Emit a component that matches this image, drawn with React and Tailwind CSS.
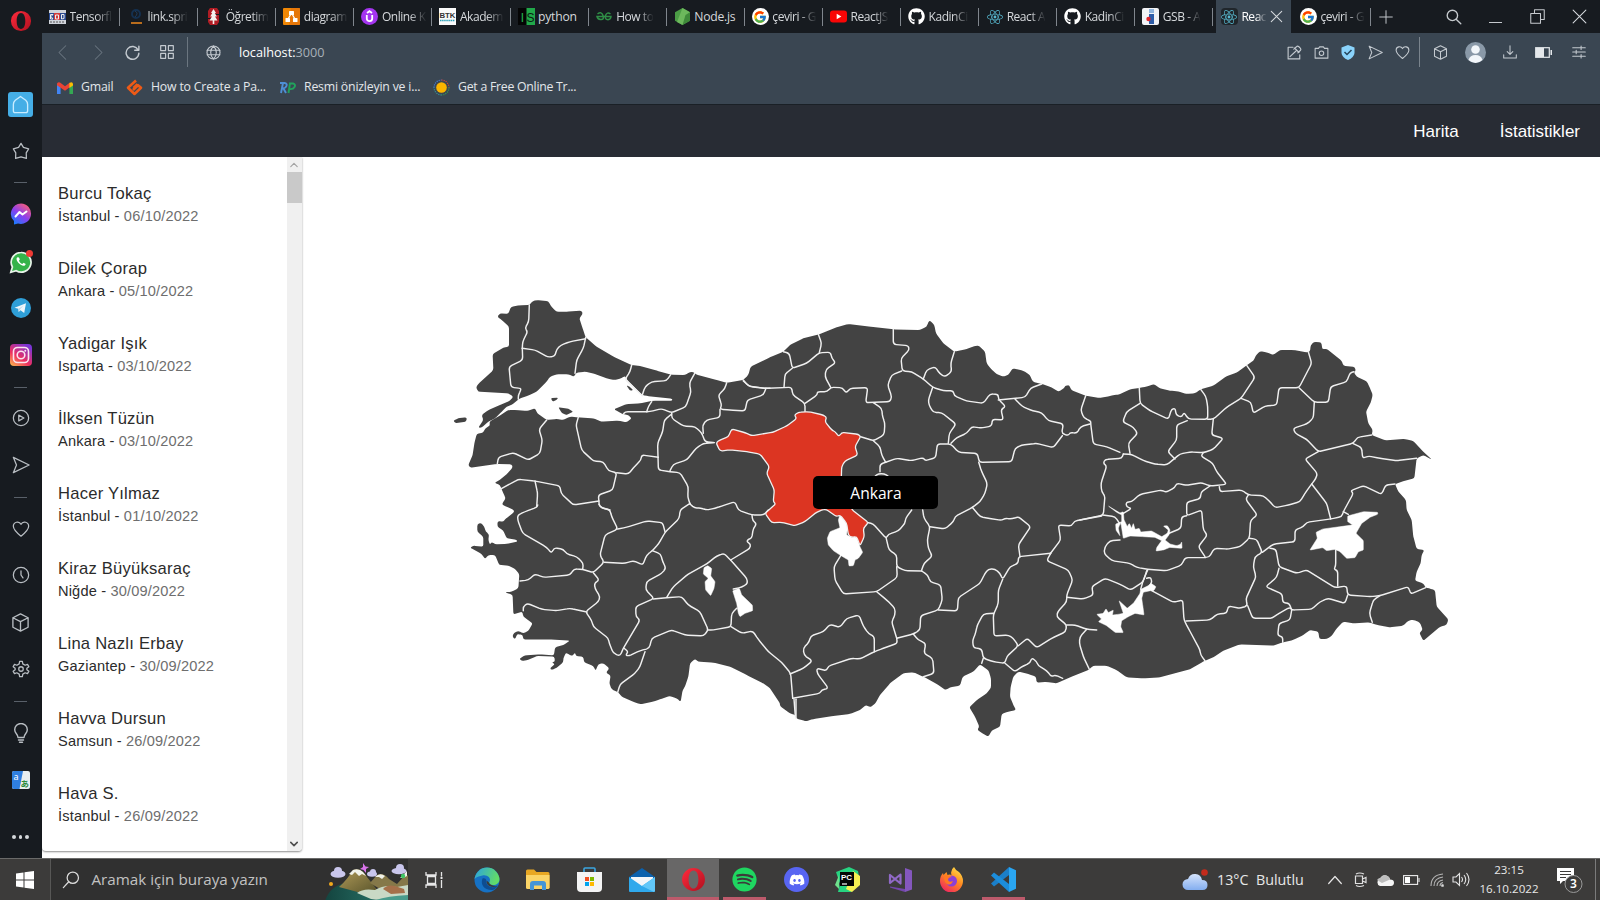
import React from "react";
import { FaReact, FaGithub, FaDiscord, FaSpotify } from "react-icons/fa";
import { FcGoogle } from "react-icons/fc";

/* ---------- Map data: sheets with an origin, points in thirds of a unit ---------- */

const COAST = [
  [440, 280, "172,110 180,100 205,102 213,80 240,76 270,75 275,65 290,60 325,64 335,82 350,95 380,95 425,92 428,102 418,115 428,145 437,172 470,200 520,230 575,255 600,258 650,272 692,284 735,285 750,276 760,276 768,283 830,300 860,308 910,300 925,285 932,260 990,232"],
  [740, 300, "90,172 130,155 150,135 190,115 238,103 290,82 325,72 380,79 460,88 540,90 560,80 565,66 570,62 583,75 588,100 610,130 643,155 680,147 708,137 718,138 735,155 740,190 752,206 770,222 790,230 805,225 818,205 850,212 870,225 878,245 905,252 935,262 955,275 972,265 975,258 988,255 993,270 1037,287"],
  [1080, 320, "17,227 60,234 90,228 105,224 115,225 150,208 178,204 200,200 222,192 240,205 270,212 295,214 320,222 345,220 362,208 400,197 440,168 470,158 500,136 520,122 530,103 540,94 560,97 580,105 600,90 640,90 680,97 690,95 692,75 702,66 724,67 727,88 740,86 785,122 790,137 825,141 827,153 822,158 830,170 860,184 870,204 878,225 872,248 858,275 865,310 878,330 875,345 915,361 975,357 1000,363 1025,390 1053,417 1054,418 1030,405 1010,415 1003,475 975,482 945,492 955,515 978,540 980,570 995,600 1000,650 1010,687 1033,690 1025,705 1022,730 1010,755 1005,782 1030,790 1037,803 1047,805 1065,810 1070,860 1105,898 1100,915 1080,920 1030,962 1018,938 1028,930 1020,908 1000,899 985,902 970,917 930,922 890,915 868,907 820,910 790,905 770,925 755,948 740,957 718,957 715,935 690,930 670,945 640,960 608,967 580,977 480,973 430,992 400,1012 375,1022 360,1030 330,1048"],
  [780, 500, "1140,532 1090,535 1040,532 1010,510 980,497 940,497 925,510 880,528 840,545 830,550 800,546 770,548 768,530 745,522 715,515 700,530 692,560 690,590 700,615 708,630 685,635 665,642 660,680 635,692 625,710 612,703 592,690 598,680 585,650 568,622 590,600 620,580 633,563 633,535 626,512 600,493 580,515 548,530 540,557 510,562 497,570 470,552 430,530 400,517 370,520 330,550 300,585 285,612 270,622 258,615 240,630 210,642 160,648 100,657 78,664 65,660 48,655 47,645 30,640 0,618"],
  [440, 500, "1020,610 990,565 970,550 920,525 870,500 820,488 775,485 765,477 750,490 745,530 735,560 728,570 722,605 710,595 690,588 660,598 640,605 600,613 580,605 545,590 535,577 515,568 508,550 512,527 498,518 508,505 490,490 475,492 467,512 460,498 432,487 430,470 408,468 405,457 398,468 390,465 378,458 370,475 370,487 350,503 335,510 330,505 345,492 335,487 345,485 343,470 290,468 265,480 245,483 238,476 255,466 300,463 342,466 345,442 370,435 390,422 340,419 250,418 248,405 232,402 225,418 217,410 222,398 235,393 250,400 265,393 278,370 250,350 247,335 220,343 218,285 195,277 215,275 235,265 238,222 225,207 205,197 178,195 165,165 145,165 135,177 125,162 90,143 100,137 130,140 130,110 112,95 112,73 122,68 133,80 137,95 147,102 145,120 150,135 155,125 165,133 200,132 232,125 230,119 200,115 190,92 172,80 173,63 190,65 195,58 205,50 222,37 222,30 200,20 188,15"],
  [440, 280, "187,670 197,655 190,640 180,615 163,608 175,603 200,583 218,562 215,553 170,552 90,563 85,555 98,525 103,490 110,462 130,458 135,445 150,437 148,425 175,410 205,390 230,390 260,393 285,385 292,400 320,420 350,417 370,420 390,410 415,412 460,415 485,425 535,422 560,427 575,415 565,405 550,403 522,388 560,372 600,370 640,362 697,362 697,356 620,348 607,345 560,298 555,287 545,295 525,300 505,297 465,282 435,275 408,278 403,290 385,283 350,283 330,290 320,305 290,335 265,347 240,355 215,375 200,380 185,395 165,415 145,425 125,443 115,443 130,420 125,405 145,390 180,375 210,362 220,350 205,340 115,335 108,322 115,312 160,270 158,222 190,203 207,200 207,140 185,120"],
];

const ISLANDS = [
  [440, 280, "40,422 55,415 78,412 81,418 76,426 45,429"],
  [440, 280, "332,354 355,353 350,360 338,365"],
  [440, 280, "355,382 385,386 400,395 378,405 365,398"],
  [440, 280, "559,316 568,319 580,331 570,332"],
];

const LAKES = [
  [440, 500, "792,203 803,197 815,205 812,228 825,245 822,265 812,287 797,270 795,245 805,235 790,222"],
  [440, 500, "878,272 898,265 905,285 937,315 938,332 915,340 900,350 895,340 890,310"],
  [740, 300, "300,645 315,655 322,680 320,705 335,712 350,710 360,740 368,757 355,775 345,780 340,797 327,798 325,780 300,765 280,752 265,735 262,715 270,695 300,683 295,660"],
  [1080, 320, "690,690 712,655 708,637 728,627 780,620 818,615 803,605 803,588 850,575 893,577 893,583 870,592 845,610 828,640 850,662 850,690 835,695 825,713 800,715 780,695 765,688 740,692 728,683"],
  [1080, 320, "85,558 120,579 130,575 132,600 142,620 148,610 155,625 160,610 165,628 178,625 182,636 215,633 245,650 262,640 265,630 250,618 262,617 270,630 267,645 255,660 270,672 290,677 302,673 305,665 306,685 270,682 250,690 228,693 230,683 245,662 225,652 190,650 150,648 130,655 122,605 115,625 120,648 108,630 107,612 125,605 125,585 110,577"],
  [1080, 320, "50,883 70,880 78,866 85,878 100,870 97,885 115,883 130,880 117,842 142,865 160,850 180,820 182,808 205,797 213,790 228,800 221,812 210,812 190,817 185,835 188,855 192,885 178,882 165,880 145,890 125,902 122,920 130,938 105,937 80,917 55,905 65,897"],
];

const ANKARA = [740, 300, "-72,428 -60,420 -35,410 -25,387 15,398 35,407 98,397 140,378 170,355 163,345 175,337 205,335 250,345 260,352 255,365 275,390 285,395 297,410 305,397 355,403 362,410 345,440 353,465 315,483 305,500 303,560 335,628 385,668 370,685 373,710 360,737 350,710 335,712 325,705 320,670 300,645 290,650 258,628 245,630 225,640 195,665 165,677 125,667 95,668 75,640 107,612 100,605 103,570 80,520 88,500 60,462 20,455 -30,450 -60,453"];

const BORDERS = [
  [440, 280, [
    "268,75 266,125 255,145 263,155 248,185 247,205",
    "247,205 285,210 325,232 345,228 350,208 362,196 390,185 437,176",
    "247,205 248,240 207,260 213,322 245,325 235,345 235,358",
    "437,172 430,205 410,240 405,280",
    "575,255 570,275 555,298 607,347",
    "692,284 680,302 635,305 615,320 607,345",
    "764,280 748,310 753,335 738,380 695,398 665,386 630,395 555,395 550,403",
    "635,365 625,380 620,395",
    "860,308 855,325 835,345 845,375 840,388 870,390 915,393 922,360 970,345 978,325",
    "910,300 925,318 975,325 990,325",
    "840,388 840,412 800,420 788,435 790,460",
    "695,398 695,415 730,438 765,440 785,458 795,485 828,488 790,490 768,505 740,540 700,553 690,572",
    "695,402 673,420 668,455 653,490 655,570 690,575 720,578 745,620 743,650 750,672",
    "655,532 605,525 603,540 585,558 565,582 530,578",
    "415,412 408,435 425,510 460,543 490,545 505,572 530,578 518,630 475,645 478,680 510,690",
    "320,420 297,448 307,480 300,520 265,540 220,518 175,532 172,552",
    "180,628 235,598 285,603 360,618 363,640 400,675 477,663",
    "285,603 293,640 290,680",
    "750,672 765,685 780,683 800,690 825,685 845,678 885,665 895,690 935,705 970,705 985,690",
  ]],
  [740, 300, [
    "130,155 148,160 157,205 200,190 238,158 272,157 275,175 287,188 258,208 255,230 272,262",
    "235,103 245,130 238,158",
    "157,205 135,222 132,262",
    "10,243 30,260 75,265 155,262 158,285 195,310 195,335",
    "195,310 232,285 232,275 262,275 272,262 308,263 318,280 330,265 383,263 377,308 450,305 455,290 443,255 455,225 485,213",
    "460,88 460,133 505,137 508,150 483,175 487,213 515,215 550,237 578,262 610,272 640,272 642,287 680,303 730,310 750,282 775,283 775,297 797,320 783,328 790,360 757,358 755,378 725,384 695,380 680,400 650,413 633,430",
    "643,155 632,190 635,215 615,230 600,222 585,200 560,210 550,237",
    "578,262 565,300 567,315 580,337 605,338 648,372 628,400 625,430",
    "400,308 425,325 428,352 435,370 432,405 400,422 362,410",
    "400,422 420,440 425,465 437,487",
    "437,487 470,475 515,482 550,473 555,482 587,473 592,432 633,432 655,457 712,460 718,487 815,485 825,445 845,435 890,430 940,443 967,407",
    "437,487 420,493 420,515",
    "406,528 415,521 433,521 444,528",
    "775,300 855,292 872,264 905,252",
    "825,297 845,318 870,330 905,338 925,362 970,372 965,400 985,407 990,397 1010,400 1022,380 1050,372",
    "1037,287 1022,330 1032,355 1052,362 1052,372 1060,432 1100,440 1140,457",
    "716,487 725,515 742,550 735,580 720,605 697,622 645,650 640,665 615,687 570,680",
    "697,622 720,650 745,655 785,661 795,655 815,657 835,650 872,680 835,735 840,770",
    "930,762 962,720 955,675 995,678 1003,663 1085,648",
    "515,630 497,655 495,670 475,693 445,703 438,715 400,672 385,668",
    "548,630 552,655 570,680 562,720 565,745 577,768 552,790 545,810",
  ]],
  [440, 500, [
    "293,15 290,22 255,35 233,45 233,60 248,100 300,130 320,142 335,160 342,143 370,148 380,162 410,170 430,190 428,208",
    "477,13 485,24 510,30 515,50 533,87 495,105 480,165 492,187 460,218 428,208 402,207 390,225 310,232 285,222 265,240 240,243",
    "533,87 560,82 620,63 668,68 675,95",
    "750,10 720,30 718,55 675,97 657,130 637,152 620,165 608,195 580,182 555,190 492,187",
    "637,152 662,162 668,185 678,205 665,220 620,245 617,270 642,295 587,320 588,350 600,360 550,445 540,468 520,460 508,430 505,415 460,380 455,362 437,335 475,305 480,290 465,265 463,250 478,240 460,218",
    "437,335 390,325 350,332 305,328 262,310 250,320 250,332",
    "640,297 680,293 725,290 745,315 780,335 805,390 790,408 735,405 695,390 635,415 628,445 600,452 565,468 557,465 565,455 552,445",
    "615,455 600,500 585,520 540,553 533,577",
    "680,292 700,260 745,222 800,192 830,168 852,160 872,180 920,235 923,250 905,262 880,267",
    "872,180 930,145 932,132 920,125 925,118 935,115 940,85 950,72 938,62 936,45",
    "890,325 875,340 873,380 820,390 805,390",
    "873,380 905,400 938,393 955,418 985,455 1025,487 1052,520 1058,595",
    "1068,598 1068,655",
    "1062,597 1066,648",
  ]],
  [780, 500, [
    "183,165 162,200 165,240 190,282 290,275 352,232 350,200",
    "318,112 327,150 350,165 350,200 375,212 425,213",
    "290,275 320,300 345,325 345,345 335,365 350,415",
    "425,213 443,225 450,245 482,255 487,300 475,330 422,347 420,390 400,402 350,415",
    "350,415 352,430 310,445 283,455 240,477 215,475 145,498 140,512 110,505 112,520 145,565 125,570 120,580 38,595",
    "283,455 283,410 265,400 250,378 237,345 200,355 180,382 150,373 130,395 92,408 88,425 70,445 72,465 97,483 70,505 30,522",
    "400,402 415,420 437,430 432,460 458,475 462,520 430,530",
    "475,330 532,333 535,293 600,250 615,220 625,207 645,207 660,220 668,238 690,200 715,190 715,170 812,160",
    "668,238 655,270 655,310 640,345 642,408 685,405 700,415 715,437 680,470 675,490 640,485 610,475 605,447 580,443 578,420 585,405 592,375 610,342 640,340",
    "605,490 610,475",
    "715,437 742,415 770,443 815,415 857,395 860,375 830,350 833,335 860,305 860,285 878,240 865,210 800,182 812,160",
    "860,375 885,375 920,388 950,390",
    "920,388 900,410 898,430 910,470 928,508",
    "675,490 705,515 730,497 750,490 755,473 770,485 775,497 800,512 815,530 825,525 848,535",
    "860,292 910,297 940,285 935,260 975,235 1020,253 1052,270 1090,245 1100,212",
  ]],
  [1080, 320, [
    "178,204 180,250 210,272 265,297 275,267 286,265 288,285 305,292 312,277 325,297 383,298 383,260 378,230 362,208",
    "180,250 140,275 128,305 160,322 173,340 145,370 150,400",
    "130,402 155,403 190,422 225,432 260,435 300,402 330,396 370,398 400,388 430,355 395,345 400,298",
    "383,298 400,298 440,262 483,235 525,172 500,136",
    "322,302 290,315 290,360 263,395 285,417",
    "483,235 513,247 520,280 555,258 590,255 597,203 657,203 695,130 685,95",
    "657,203 703,247 745,247 752,200 800,185 810,158 822,155",
    "703,247 700,295 680,312 640,325 645,340 680,358 715,395 820,370 832,352 875,345",
    "818,370 845,383 848,415 865,408 900,415 950,422 1010,415",
    "715,395 675,417 712,460 708,475 695,492 675,520 660,545 625,555 585,563 570,545 550,527 505,525 485,510 420,515 418,500",
    "370,398 363,408 398,430 410,455 440,493 390,498 365,488 320,496 290,490 285,502 258,517 245,510 180,523 155,545 138,547 140,562 155,565 130,580",
    "390,498 362,517 362,535 320,547 320,587 365,570 370,630 382,645 355,680 375,710",
    "320,587 305,590 303,625 262,642",
    "130,402 125,415 75,418 70,430 80,438 63,490 65,515 75,527 70,585 0,600",
    "68,585 105,590 120,612",
    "505,525 497,538 532,585 512,600 508,655 480,680 445,687 403,685 387,712 315,713 305,735 260,752 203,748 170,742 150,730 95,722 72,700 75,680 90,662 120,660",
    "508,655 530,658 547,697 525,710 520,740 528,770 497,838 503,857 480,865 445,858 440,880 412,882 390,900 318,903",
    "547,697 580,672 645,665 645,630 670,620 680,607 752,597 785,590 790,575 820,520 812,512 850,497 905,523 917,495 945,492",
    "695,492 740,550 752,597",
    "570,685 588,688 597,740 650,760 680,750 765,803 800,798 803,825 870,830 900,827 985,800 992,822 1037,803",
    "790,575 805,583",
    "597,745 590,772 557,800 607,822 608,848 628,850 635,870",
    "503,857 518,895 575,895 600,878 630,862 635,870 695,868 720,845 745,835 795,850 803,825",
    "635,870 630,900 597,910 593,947 608,950 608,967",
    "767,690 767,738 762,748 773,752 773,798",
    "900,827 880,840 868,880 877,907",
    "203,750 190,780 182,808",
    "200,775 212,772 216,785 210,795",
    "215,812 280,847 308,840 312,900 325,925 360,990 362,1005 375,1022",
  ]],
];

const project = ([ox, oy, text]) =>
  text.split(" ").map((pair) => {
    const [x, y] = pair.split(",").map(Number);
    return [ox + x / 3, oy + y / 3];
  });

/* Point on the way from a to b, at most `max` away from a and never past the middle. */
const towards = (a, b, max) => {
  const d = Math.hypot(b[0] - a[0], b[1] - a[1]) || 1;
  const t = Math.min(max / d, 0.5);
  return [a[0] + (b[0] - a[0]) * t, a[1] + (b[1] - a[1]) * t];
};

const fmt = ([x, y]) => `${x.toFixed(1)} ${y.toFixed(1)}`;

/* Path through the points with softly rounded corners. */
function rounded(points, closed, radius = 4) {
  const n = points.length;
  if (closed) {
    const parts = points.map((p, i) => {
      const before = towards(p, points[(i + n - 1) % n], radius);
      const after = towards(p, points[(i + 1) % n], radius);
      return `${i ? "L" : "M"}${fmt(before)}Q${fmt(p)} ${fmt(after)}`;
    });
    return `${parts.join("")}Z`;
  }
  let d = `M${fmt(points[0])}`;
  for (let i = 1; i < n - 1; i++) {
    d += `L${fmt(towards(points[i], points[i - 1], radius))}Q${fmt(points[i])} ${fmt(towards(points[i], points[i + 1], radius))}`;
  }
  return `${d}L${fmt(points[n - 1])}`;
}

const coastPath = rounded(COAST.flatMap(project), true, 2);

function TurkeyMap() {
  return (
    <svg viewBox="303 157 1297 701" className="block h-full w-full">
      <path d={coastPath} fill="#434343" />
      {ISLANDS.map((s, i) => <path key={i} d={rounded(project(s), true, 1.5)} fill="#434343" />)}
      <g fill="none" stroke="#f0f0f0" strokeWidth="1.45" strokeLinejoin="round" strokeLinecap="round">
        {BORDERS.flatMap(([x, y, lines], i) =>
          lines.map((line, j) => <path key={`${i}-${j}`} d={rounded(project([x, y, line]), false, 3)} />)
        )}
      </g>
      {LAKES.map((s, i) => <path key={i} d={rounded(project(s), true, 0.8)} fill="#fff" stroke="#fff" strokeWidth="0.5" />)}
      <path d={rounded(project(ANKARA), true, 2.5)} fill="#dc3522" stroke="#f0f0f0" strokeWidth="1.3" strokeLinejoin="round" />
    </svg>
  );
}

/* ---------- Icons ---------- */

function Line({ size = 18, children, className = "", w = 1.4 }) {
  return (
    <svg width={size} height={size} viewBox="0 0 20 20" fill="none" stroke="currentColor" strokeWidth={w}
      strokeLinecap="round" strokeLinejoin="round" className={`shrink-0 ${className}`}>
      {children}
    </svg>
  );
}

const Cube = (p) => <Line {...p}><path d="M10 1 18 5v10l-8 4-8-4V5zM2 5l8 4 8-4M10 9v10" /></Line>;
const Heart = (p) => <Line {...p}><path d="M10 18C5 14 1.5 11 1.5 7A4.5 4.5 0 0 1 10 4.8 4.5 4.5 0 0 1 18.500 7C18.500 11 15 14 10 18z" /></Line>;
const Send = (p) => <Line {...p}><path d="M1.500 1.500 19 10 1.500 18.500 5 10z" /></Line>;

function Opera({ size, id }) {
  return (
    <svg width={size} height={size} viewBox="0 0 24 24">
      <defs>
        <linearGradient id={id} x1="0" y1="0" x2="1" y2="1">
          <stop offset="0" stopColor="#ff2b3d" /><stop offset="1" stopColor="#b0101f" />
        </linearGradient>
      </defs>
      <path fillRule="evenodd" fill={`url(#${id})`} d="M12 1a11 11 0 1 0 0 22 11 11 0 0 0 0-22zm0 2.300c3 0 4.700 3.800 4.700 8.700s-1.700 8.700-4.700 8.700S7.300 16.900 7.300 12 9 3.300 12 3.300z" />
    </svg>
  );
}

function Messenger() {
  return (
    <svg width="22" height="22" viewBox="0 0 22 22">
      <defs>
        <linearGradient id="msg" x1="0.100" y1="1" x2="0.800" y2="0">
          <stop offset="0" stopColor="#0a84ff" /><stop offset="0.500" stopColor="#8a3ff0" /><stop offset="1" stopColor="#ff5f72" />
        </linearGradient>
      </defs>
      <path d="M11 .5a10.200 10.200 0 1 1-3 20L4 21.500V18A10.200 10.200 0 0 1 11 .5z" fill="url(#msg)" />
      <path d="M5.500 13.500 9.500 9l3 2.500 4-3" fill="none" stroke="#fff" strokeWidth="2" strokeLinejoin="round" strokeLinecap="round" />
    </svg>
  );
}

function Whatsapp() {
  return (
    <svg width="24" height="24" viewBox="0 0 24 24">
      <path d="M12 2.500A9.800 9.800 0 1 1 7.200 20.700L1.800 22.300 3.400 17A9.800 9.800 0 0 1 12 2.500z" fill="#35b34a" stroke="#e7f3e8" strokeWidth="1.700" />
      <path d="M8.500 7.200c-1.500.8-1.300 3 .6 5.200 2 2.300 5 4.200 6.700 3 1.300-1 .9-1.600.1-2l-1.400-.7-1.200 1.200c-1.500-.6-2.700-1.800-3.400-3.200l.9-1.200-.8-2.100z" fill="#fff" />
      <circle cx="20.500" cy="3.500" r="3.500" fill="#ef3b35" />
    </svg>
  );
}

function Telegram() {
  return (
    <svg width="20" height="20" viewBox="0 0 20 20">
      <circle cx="10" cy="10" r="10" fill="#2f9fd8" />
      <path d="M3.500 9.800 15 5.300 13.200 15 9.500 12.300 7.700 14l-.4-3.200z" fill="#eef6fb" />
      <path d="M7.300 10.900 12.500 7.500 9 11.300 7.700 14z" fill="#b7d7ea" />
    </svg>
  );
}

function Instagram() {
  return (
    <svg width="22" height="22" viewBox="0 0 22 22">
      <defs>
        <linearGradient id="ig" x1="0" y1="1" x2="0.700" y2="0">
          <stop offset="0" stopColor="#fdc04e" /><stop offset="0.450" stopColor="#ee2f5f" /><stop offset="1" stopColor="#7b35d6" />
        </linearGradient>
      </defs>
      <rect width="22" height="22" rx="4" fill="url(#ig)" />
      <g fill="none" stroke="#fbe4ee" strokeWidth="1.600">
        <rect x="3.500" y="3.500" width="15" height="15" rx="4" /><circle cx="11" cy="11" r="3.800" />
      </g>
      <circle cx="15.300" cy="6.700" r="1" fill="#fbe4ee" />
    </svg>
  );
}

const Dash = () => <span className="h-px w-[13px] bg-[#596069]" />;

const RAIL = [
  ["h-[42px]", <Opera size={22} id="op1" />],
  ["h-[39px]", null],
  ["h-[46px]", (
    <span className="flex size-[25px] items-center justify-center rounded-[3px] bg-[#45aee6] text-[#c9ecff]">
      <Line size={19}><path d="M10 1.500 15.500 5.500Q17.500 7.200 17.500 10V16.500Q17.500 18.500 15.500 18.500H4.500Q2.500 18.500 2.500 16.500V10Q2.500 7.200 4.500 5.500z" /></Line>
    </span>
  )],
  ["h-[47px]", <Line><path d="M10 1.500 12.700 6 18.500 7.600 15.800 12 16 18.300 10 16.500 4 18.300 4.200 12 1.500 7.600 7.300 6z" /></Line>],
  ["h-[17px]", <Dash />],
  ["h-[46px]", <Messenger />],
  ["h-[49px]", <Whatsapp />],
  ["h-[44px]", <Telegram />],
  ["h-[50px]", <Instagram />],
  ["h-[14px]", <Dash />],
  ["h-[48px]", <Line><circle cx="10" cy="10" r="8.500" /><path d="M7.500 6.800 13.200 10 7.500 13.200z" /></Line>],
  ["h-[46px]", <Send />],
  ["h-[18px]", <Dash />],
  ["h-[45px]", <Heart />],
  ["h-[48px]", <Line><circle cx="10" cy="10" r="8.500" /><path d="M10 5.500V10l2.200 3.200" /></Line>],
  ["h-[46px]", <Cube size={19} />],
  ["h-[48px]", <Line><path d="M8 4.300 8.500 1.500h3L12 4.300l2.600 1.500 2.600-1 1.500 2.600L16.500 9.200v1.600l2.200 1.800-1.500 2.600-2.600-1L12 15.700l-.5 2.800h-3L8 15.700l-2.600-1.500-2.600 1-1.500-2.600 2.200-1.800V9.200L1.300 7.400l1.500-2.600 2.600 1z" /><circle cx="10" cy="10" r="2.500" /></Line>],
  ["h-[16px]", <Dash />],
  ["h-[48px]", <Line size={20}><path d="M7 14.500C7 11 3.700 10.500 3.700 6.800a6.300 6.300 0 0 1 12.600 0C16.300 10.500 13 11 13 14.500zM7.500 17h5M8.500 19.300h3" /></Line>],
  ["h-[46px]", (
    <svg width="18" height="18" viewBox="0 0 18 18">
      <rect width="18" height="18" rx="2" fill="#e8eef0" /><path d="M2 0h9L7.500 18H2a2 2 0 0 1-2-2V2a2 2 0 0 1 2-2z" fill="#2f7fe0" />
      <text x="1.500" y="8.500" fontSize="9" fill="#fff" fontFamily="Noto Sans, sans-serif">a</text>
      <text x="8.500" y="15.500" fontSize="8.500" fontWeight="700" fill="#2c8a3c" fontFamily="Noto Sans CJK JP, sans-serif">あ</text>
    </svg>
  )],
  ["h-[13px]", null],
  ["h-[42px]", <span className="flex gap-[3px]"><i className="size-[3.500px] rounded-full bg-[#d5d8db]" /><i className="size-[3.500px] rounded-full bg-[#d5d8db]" /><i className="size-[3.500px] rounded-full bg-[#d5d8db]" /></span>],
];

/* ---------- Browser tabs ---------- */

const react = <FaReact size={16} color="#57b8cf" />;
const github = <FaGithub size={17} color="#fff" />;
const google = <span className="flex size-[17px] shrink-0 items-center justify-center rounded-full bg-white"><FcGoogle size={14} /></span>;

const TABS = [
  ["Tensorfl", <svg width="17" height="16" viewBox="0 0 17 16"><rect y="1" width="17" height="14" fill="#cfd3da" /><rect y="4" width="17" height="7" fill="#2a4a90" /><rect x="5" y="4" width="6" height="7" fill="#d33b3b" /><path d="M1.500 10V5.500h2.500L2 7.500 4 10zM6.500 10V6h3v4zM12.500 10V5.500h2.500v4z" stroke="#eee" fill="none" /><path d="M1 13h15" stroke="#555" strokeDasharray="2 1" /></svg>],
  ["link.spri", <svg width="17" height="17" viewBox="0 0 17 17"><circle cx="9" cy="6" r="4" fill="none" stroke="#14304f" strokeWidth="2" /><path d="M8 3q4 2 0 6" fill="none" stroke="#1d3d60" /><path d="M4 15h11" stroke="#f08a1c" strokeWidth="1.500" /></svg>],
  ["Öğretim", <svg width="17" height="17" viewBox="0 0 17 17"><path d="M5 0h7l2 3v3H10v1h4v7l-2 3H5l-2-3v-3h4v-1H3V3z" fill="#b01c24" /><path d="M8.500 1 11 5H9.800l2 3.500H10l2.500 4H9.300V16H7.700v-3.500H4.500l2.500-4H5.200l2-3.500H6z" fill="#f4f1ee" /></svg>],
  ["diagram", <svg width="17" height="17" viewBox="0 0 17 17"><rect width="17" height="17" rx="1" fill="#f08705" /><path d="M8 0h9v17H6z" fill="#df6c0c" opacity=".6" /><path d="M8.500 5 4.500 12M8.500 5l4 7" stroke="#fff" strokeWidth="1.300" /><rect x="6" y="3" width="5" height="4" rx=".6" fill="#fff" /><rect x="2.500" y="10" width="4.500" height="4" rx=".6" fill="#fff" /><rect x="10" y="10" width="4.500" height="4" rx=".6" fill="#fff" /></svg>],
  ["Online K", <svg width="17" height="17" viewBox="0 0 17 17"><circle cx="8.500" cy="8.500" r="8.500" fill="#a435f0" /><path d="M5.800 7v3.500a2.700 2.700 0 0 0 5.400 0V7M6 5l2.500-1.800L11 5" stroke="#fff" strokeWidth="1.800" fill="none" /></svg>],
  ["Akadem", <svg width="17" height="17" viewBox="0 0 17 17"><rect width="17" height="17" fill="#fafafa" /><text x="0.500" y="9.500" fontSize="8" fontWeight="700" fontFamily="Liberation Sans, sans-serif" fill="#333" textLength="16" lengthAdjust="spacingAndGlyphs">BTK</text><path d="M1 12.500h15" stroke="#2aa0b8" strokeWidth="1.500" strokeDasharray="1.500 .6" /></svg>],
  ["python", <svg width="17" height="17" viewBox="0 0 17 17"><rect width="9" height="17" fill="#050505" /><rect x="8.500" width="8.500" height="17" fill="#21a84a" /><text x="2.500" y="13.500" fontSize="13.500" fontFamily="Liberation Sans, sans-serif" fill="#21a84a">I</text><text x="8.500" y="13.500" fontSize="13" fontFamily="Liberation Sans, sans-serif" fill="#0a2012" textLength="8" lengthAdjust="spacingAndGlyphs">S</text></svg>],
  ["How to", <svg width="17" height="17" viewBox="0 0 17 17" fill="none" stroke="#2f8d46" strokeWidth="1.500"><path d="M1.500 6q4-3 5.500 1.500t-2.500 4Q1.500 11 1 8.500h14Q14.800 11.500 12 11.700 8.600 11.500 9.500 7.500 11 3.500 14.500 6" /></svg>],
  ["Node.js", <svg width="17" height="17" viewBox="0 0 17 17"><path d="M8.500 0 16 4.200v8.600L8.500 17 1 12.800V4.200z" fill="#4b9c45" /><path d="M8.500 0 16 4.200 8.500 17 3 13.900z" fill="#6cb85c" /><path d="M16 4.200v8.600L8.500 17l3-10z" fill="#3f8a3a" /></svg>],
  ["çeviri - G", google],
  ["ReactJS", <svg width="17" height="17" viewBox="0 0 17 17"><rect y="2.500" width="17" height="12" rx="3" fill="#f90606" /><path d="M6.700 5.800v5.400l4.700-2.700z" fill="#fff" /></svg>],
  ["KadinCi", github],
  ["React A", react],
  ["KadinCi", github],
  ["GSB - A", <svg width="17" height="17" viewBox="0 0 17 17"><rect width="17" height="17" rx="2" fill="#f2f3f6" /><path d="M7 1h5v4H7z" fill="#8fb4dd" /><path d="M7 6h5v10H7z" fill="#2e5da8" /><circle cx="6.500" cy="11" r="2.200" fill="#e0262d" /></svg>],
];

const TITLE = "mt-px ml-[3.500px] shrink-0 whitespace-nowrap text-[12px] tracking-[-0.45px] [mask-image:linear-gradient(90deg,#000_62%,rgba(0,0,0,0.05)_100%)]";
const TITLE_FULL = "mt-px ml-[3.500px] shrink-0 whitespace-nowrap text-[12.200px] tracking-[-0.25px]";

const UNFADED = ["python", "Node.js"];

function Tab({ title, icon }) {
  return (
    <div className="flex h-full w-[78.100px] shrink-0 items-center pl-[7px]">
      <span className="flex w-[17px] shrink-0 items-center justify-center">{icon}</span>
      <span className={`text-[#d5d8db] ${UNFADED.includes(title) ? TITLE_FULL : TITLE}`}>{title}</span>
      <span className="ml-auto h-[18px] w-px shrink-0 bg-[#80868d]" />
    </div>
  );
}

function TabBar() {
  return (
    <div className="flex h-[33px] shrink-0 items-center bg-[#171b20]">
      {TABS.map(([title, icon], i) => <Tab key={i} title={title} icon={icon} />)}
      <div className="ml-[2.500px] flex h-full w-[75px] shrink-0 items-center bg-[#3a4652] pl-[5px]">
        <span className="flex size-[17px] shrink-0 items-center justify-center rounded-sm bg-[#20262b]">{react}</span>
        <span className={`w-[25px] text-white ${TITLE}`}>Reac</span>
        <Line size={13} className="ml-[4px] text-[#d5d9dd]" w={1.6}><path d="M2 2 18 18M18 2 2 18" /></Line>
      </div>
      <div className="flex h-full w-[80px] shrink-0 items-center pl-[9px]">
        {google}
        <span className={`text-[#d5d8db] ${TITLE}`}>çeviri - G</span>
        <span className="ml-auto h-[18px] w-px shrink-0 bg-[#80868d]" />
      </div>
      <Line size={14} className="ml-[8px] text-[#c5c9cd]"><path d="M10 1v18M1 10h18" /></Line>
      <Line size={16} className="ml-[53px] text-[#c5c9cd]" w={1.7}><circle cx="8" cy="8" r="6.500" /><path d="M13 13 18.500 18.500" /></Line>
      <span className="mt-[12px] ml-[27px] h-px w-[13px] bg-[#c5c9cd]" />
      <Line size={15} className="ml-[28px] text-[#c5c9cd]"><path d="M1 6h13v13H1zM6 6V1h13v13h-5" /></Line>
      <Line size={15} className="ml-[27px] text-[#d5d9dd]"><path d="M1.500 1.500 18.500 18.500M18.500 1.500 1.500 18.500" /></Line>
    </div>
  );
}

/* ---------- Toolbar ---------- */

function Toolbar() {
  return (
    <div className="flex h-[38px] items-center text-[#c4cad0]">
      <Line size={15} className="ml-[14px] text-[#69747f]"><path d="M13 1 4 10l9 9" /></Line>
      <Line size={15} className="ml-[19px] text-[#69747f]"><path d="M7 1l9 9-9 9" /></Line>
      <Line size={15} className="ml-[20px]" w={1.900}><path d="M17.500 6.500A8.500 8.500 0 1 0 18.500 11M18.500 1.500v5.500h-5.500" /></Line>
      <Line size={14} className="ml-[20px]" w={1.700}><path d="M1 1h7v7H1zM12 1h7v7h-7zM1 12h7v7H1zM12 12h7v7h-7z" /></Line>
      <span className="ml-[13px] h-[30px] w-px bg-[#6b7680]" />
      <Line size={15} className="ml-[18px]" w={1.500}><circle cx="10" cy="10" r="8.700" /><path d="M1.500 7h17M1.500 13h17M10 1.300C5 6 5 14 10 18.700M10 1.300c5 4.700 5 12.700 0 17.400" /></Line>
      <span className="mt-[2px] ml-[18px] text-[12.700px] text-white">localhost:<span className="text-[#a7b0b8]">3000</span></span>
      <div className="ml-auto flex items-center pr-[14px]">
        <Line size={15} w={1.500}><path d="M8 3H1.500v15.500H17V13M4 15.500 12 8M10 4l6 6M9 5.500 13 2q1-1 2.500 0L18 4.500q1 1.500 0 2.500l-3.500 3.500" /></Line>
        <Line size={15} className="ml-[12px]"><path d="M1.500 4.500H6L7.500 2.500h5L14 4.500h4.500v13h-17z" /><circle cx="10" cy="11" r="3" /></Line>
        <svg width="14" height="15" viewBox="0 0 14 15" className="ml-[12px]"><path d="M7 0 13.500 2.500V8Q13 12.500 7 15 1 12.500.5 8V2.500z" fill="#8ad3fb" /><path d="M3.500 7 6 9.500 10.500 5" fill="none" stroke="#26465c" strokeWidth="1.500" /></svg>
        <Send size={15} className="ml-[13px]" />
        <Heart size={15} className="ml-[12px]" />
        <span className="ml-[9px] h-[30px] w-px bg-[#7a848d]" />
        <Cube size={15} className="ml-[13px]" />
        <svg width="21" height="21" viewBox="0 0 21 21" className="ml-[17px]"><circle cx="10.500" cy="10.500" r="10.500" fill="#8a99a8" /><circle cx="10.500" cy="7.500" r="4.300" fill="#f2f6fa" /><path d="M3.500 18Q5 13 10.500 13T17.500 18Q14 21 10.500 21T3.500 18z" fill="#f2f6fa" /></svg>
        <Line size={14} className="ml-[17px]" w={1.500}><path d="M10 1v12M6 9.500l4 4 4-4M1 14v4.500h18V14" /></Line>
        <svg width="18" height="11" viewBox="0 0 18 11" className="ml-[18px]"><rect x=".7" y=".7" width="13.600" height="9.600" fill="none" stroke="#e4e8eb" strokeWidth="1.200" /><rect x="1" y="1" width="8" height="9" fill="#e4e8eb" /><rect x="15.500" y="3" width="1.500" height="5" fill="#e4e8eb" /></svg>
        <Line size={14} className="ml-[19px]" w={1.500}><path d="M1 4h18M1 10h18M1 16h18M13 1.500v5M6 7.500v5M13 13.500v5" /></Line>
      </div>
    </div>
  );
}

function Bookmarks() {
  return (
    <div className="flex h-[33px] items-center whitespace-nowrap text-[12.300px] tracking-[-0.2px] text-[#e3e7ea]">
      <svg width="16" height="12" viewBox="0 0 16 12" className="ml-[15px]"><path d="M0 1.500V12h3.600V5z" fill="#4285f4" /><path d="M16 1.500V12h-3.600V5z" fill="#34a853" /><path d="M0 1.800Q.5-.5 3 .5l5 3.800 5-3.800V5L8 8.700 0 3.200z" fill="#ea4335" /><path d="M12.400 1Q15.500-1 16 2v1.500L12.400 6z" fill="#fbbc04" /></svg>
      <span className="ml-[8px] w-[32px]">Gmail</span>
      <svg width="17" height="17" viewBox="0 0 17 17" className="ml-[12.500px]" fill="none" stroke="#ee5a16" strokeWidth="2.600" strokeLinejoin="round"><path d="M10 1.500 2 8.700 8.500 15 15 8.700 12 6.200 7 11M7.500 9 11.500 5.200" /></svg>
      <span className="ml-[8.500px] w-[115px]">How to Create a Pa...</span>
      <svg width="17" height="12" viewBox="0 0 17 12" className="ml-[12.500px]" fill="none" strokeWidth="1.900"><path d="M1 1h4.500q3 .5 2 3T3 6.500M4 1 2 11M4.500 6.500 7 11" stroke="#4e8fd6" /><path d="M11 1 9.500 11M10 1.500h4q3 .8 1.500 3.500T10.500 7" stroke="#21a35c" /></svg>
      <span className="ml-[8.500px] w-[116.500px]">Resmi önizleyin ve i...</span>
      <svg width="17" height="17" viewBox="0 0 17 17" className="ml-[12px]"><circle cx="8.500" cy="8.500" r="5.300" fill="#fbb400" /><g fill="none" strokeWidth="1.200" strokeDasharray="1 1.200"><path d="M1 8.500a7.500 7.500 0 0 1 7.500-7.500" stroke="#4285f4" /><path d="M8.500 1A7.500 7.500 0 0 1 16 8.500" stroke="#ea4335" /><path d="M16 8.500A7.500 7.500 0 0 1 8.500 16" stroke="#34a853" /><path d="M8.500 16A7.500 7.500 0 0 1 1 8.500" stroke="#3aa0a0" /></g></svg>
      <span className="ml-[8.500px] tracking-[-0.26px]">Get a Free Online Tr...</span>
    </div>
  );
}

/* ---------- Page ---------- */

const PEOPLE = [
  ["Burcu Tokaç", "İstanbul", "06/10/2022"],
  ["Dilek Çorap", "Ankara", "05/10/2022"],
  ["Yadigar Işık", "Isparta", "03/10/2022"],
  ["İlksen Tüzün", "Ankara", "03/10/2022"],
  ["Hacer Yılmaz", "İstanbul", "01/10/2022"],
  ["Kiraz Büyüksaraç", "Niğde", "30/09/2022"],
  ["Lina Nazlı Erbay", "Gaziantep", "30/09/2022"],
  ["Havva Dursun", "Samsun", "26/09/2022"],
  ["Hava S.", "İstanbul", "26/09/2022"],
];

function PeopleList() {
  return (
    <aside className="mr-px flex h-[694px] w-[260px] shrink-0 overflow-hidden rounded-b-[4px] bg-white font-['Liberation_Sans',Arial,sans-serif] shadow-[0_1px_2px_rgba(0,0,0,0.45)]">
      <ul className="flex-1 pt-[23px] pl-[16px]">
        {PEOPLE.map(([name, city, date]) => (
          <li key={name} className="h-[75px] whitespace-nowrap">
            <p className="h-[25px] text-[16.600px] leading-[28px] tracking-[0.23px] text-[#2b2b2b]">{name}</p>
            <p className="text-[14.600px] leading-[23px] tracking-[0.16px] text-[#2b2b2b]">{city} - <span className="text-[#6e6e6e]">{date}</span></p>
          </li>
        ))}
      </ul>
      <div className="flex w-[15.500px] flex-col items-center bg-[#f0f0f0]">
        <Line size={8} className="mt-[4px] mb-[3px] text-[#a3a3a3]" w={3}><path d="M2 14 10 6l8 8" /></Line>
        <span className="h-[31px] w-full bg-[#c9c9c9]" />
        <Line size={8} className="mt-auto mb-[3px] text-[#505050]" w={4}><path d="M2 6 10 14l8-8" /></Line>
      </div>
    </aside>
  );
}

/* ---------- Taskbar ---------- */

const APPS = [
  [<svg width="19" height="18" viewBox="0 0 19 18" fill="none" stroke="#e6e6e6" strokeWidth="1.300"><path d="M1 1v3h10V1M2.500 5.500h8v7h-8zM1 17v-3h10v3M16.500 1v4.500M16.500 9v8" /><rect x="15.500" y="6" width="2" height="2" fill="#e6e6e6" stroke="none" /></svg>],
  [<svg width="26" height="26" viewBox="0 0 26 26"><defs><linearGradient id="edge" x1="0" y1="0" x2="1" y2="0.300"><stop offset="0" stopColor="#2ba3e0" /><stop offset="1" stopColor="#62db68" /></linearGradient></defs><circle cx="13" cy="13" r="12.500" fill="#1671c4" /><path d="M.6 12A12.500 12.500 0 0 1 25.500 12c0 4-3 6-6.500 6-3 0-4.500-1-3.700-2.500C18 11 13 7.500 8.500 8.500 4 9.500 1.500 10.500.6 12z" fill="url(#edge)" /><path d="M8.500 11.500c-2.500 6 2 12 10 11.500 2-.5 4-2 5-4-6 3-12 0-11.300-5.500.3-1.500-1.500-3-3.700-2z" fill="#0e4d92" /><path d="M12.500 13.500q-.5 5 5 6.300 4 .7 8-1.800-4 2-8 0-2-1-2.500-2.500z" fill="#3b3a39" /></svg>],
  [<svg width="24" height="22" viewBox="0 0 24 22"><path d="M0 2q0-1.500 1.500-1.500H8L10.500 3H22q1.500 0 1.500 1.500V19H0z" fill="#e8a723" /><path d="M0 6h23.500v12.500q0 1.500-1.500 1.500H1.500Q0 20 0 18.500z" fill="#fbd467" /><path d="M4 21v-6q0-3 3-3h10q3 0 3 3v6h-4v-4.500H8V21z" fill="#4595d6" /></svg>],
  [<svg width="25" height="25" viewBox="0 0 25 25"><path d="M7 6V2q0-1 1-1h9q1 0 1 1v4" fill="none" stroke="#3ba6e0" strokeWidth="1.600" /><path d="M0 5h25v16q0 4-4 4H4q-4 0-4-4z" fill="#f4f4f4" /><path d="M8 10h4v4H8z" fill="#f25022" /><path d="M13 10h4v4h-4z" fill="#7fba00" /><path d="M8 15h4v4H8z" fill="#00a4ef" /><path d="M13 15h4v4h-4z" fill="#ffb900" /></svg>],
  [<svg width="26" height="24" viewBox="0 0 26 24"><path d="M0 9 13 0l13 9v4H0z" fill="#0b61ad" /><path d="M2 9h22v6L13 20 2 15z" fill="#f3f6f9" /><path d="M0 9 13 18 26 9v14q0 1-1 1H1q-1 0-1-1z" fill="#2fa9ec" /><path d="M13 18 26 9v14l-1 1z" fill="#62c7f8" /></svg>],
  [<Opera size={25} id="op2" />, "bg-[#686767]", "w-full"],
  [<FaSpotify size={25} color="#1fd660" />, "", "w-[43px]"],
  [<span className="flex size-[25px] items-center justify-center rounded-full bg-[#5865f2]"><FaDiscord size={16} color="#fff" /></span>],
  [<svg width="26" height="25" viewBox="0 0 26 25"><path d="M1 5 14 0l9 4 2 12-9 9H3l2-8z" fill="#27d481" /><path d="M18 4l7 5v9l-8 7-6-3z" fill="#f6ef52" /><path d="M0 18 4 8v14z" fill="#6fe08c" /><rect x="5" y="5" width="14" height="14" fill="#050505" /><text x="6" y="12.500" fontSize="8" fontWeight="700" fill="#fff" fontFamily="Liberation Sans, sans-serif">PC</text><path d="M7 17h5" stroke="#fff" strokeWidth="1.200" /></svg>],
  [<svg width="25" height="24" viewBox="0 0 25 24"><path d="M17 0l7 2.500V21.500L17 24z" fill="#8457bd" /><path d="M2 18.500 17 21v3L2 19.500z" fill="#7347ab" /><path d="M2 7v8l5-4 5.500 4.500V6.500L7 11z" fill="none" stroke="#9069c6" strokeWidth="2.200" strokeLinejoin="round" /></svg>],
  [<svg width="25" height="25" viewBox="0 0 25 25"><defs><linearGradient id="ff" x1="0.800" y1="0" x2="0.200" y2="1"><stop offset="0" stopColor="#ffe14a" /><stop offset="0.450" stopColor="#ff8a20" /><stop offset="1" stopColor="#ef1f63" /></linearGradient></defs><path d="M15 0q2 4 5 5 4 4 4 9a11.500 11.500 0 0 1-23 0q0-5 3-8l.5 2 3-3 1 3q2-1 4 0Q11 3 15 0z" fill="url(#ff)" /><circle cx="12.500" cy="14" r="5.500" fill="#8b3fd6" /><path d="M5 9q4-2 8 1-4 0-4 3 1 3 5 1-2 5-6 3-3-2-3-8z" fill="#ff7a22" /></svg>],
  [<svg width="25" height="25" viewBox="0 0 25 25"><path d="M18 0 25 3.300V21.700L18 25z" fill="#2aa6f2" /><path d="M18 0 0 16.500 3 19.500 18 8z" fill="#1b7fc9" /><path d="M18 25 0 8.500 3 5.500 18 17z" fill="#1c8ddb" /></svg>, "", "w-[43px]"],
];

function Landscape() {
  return (
    <svg width="83" height="42" viewBox="0 0 83 42" className="ml-auto shrink-0">
      <defs>
        <linearGradient id="hill" x1="0" y1="0" x2="1" y2="1"><stop offset="0" stopColor="#b09a58" /><stop offset="1" stopColor="#56522a" /></linearGradient>
        <linearGradient id="sea" x1="0" y1="0" x2="1" y2="0"><stop offset="0" stopColor="#14443f" /><stop offset="1" stopColor="#2f8577" /></linearGradient>
      </defs>
      <path d="M0 42Q5 27 20 24L52 34 83 30v12z" fill="url(#sea)" />
      <path d="M14 28Q22 21 28 11 36 8 42 18L53 32 40 35z" fill="url(#hill)" />
      <path d="M24 15 28 11Q34 9 38 13L41 17 37 15 34 17 30 13 27 16z" fill="#f0f2ea" />
      <path d="M45 24 52 16Q58 13 64 20L72 25 81 15l2 2v14L60 33z" fill="#857849" />
      <path d="M50 18Q55 13 60 17L57 20 54 18zM75 19 82 12v5l-4 2z" fill="#f0f2ea" />
      <path d="M32 34Q38 29 50 31 60 25 72 28L83 26v11Q62 43 46 40z" fill="#c9d9c5" />
      <path d="M58 30Q62 25 70 27L79 30 80 34 66 35z" fill="#a5704a" />
      <path d="M48 42Q60 37 83 36v6z" fill="#4a9c8c" />
      <g fill="#c9c6ec"><ellipse cx="13" cy="15" rx="7.500" ry="3.800" /><circle cx="13" cy="12" r="4" /><ellipse cx="47" cy="15" rx="5" ry="2.800" /><circle cx="48" cy="13" r="3" /><ellipse cx="74" cy="12" rx="7.500" ry="3.200" /><circle cx="75" cy="9" r="4" /></g>
      <path d="M38 4 40.500 7.500 44 8 41 10 41 14 38.500 11 35 10 38 8z" fill="#d874ea" />
      <circle cx="6" cy="25" r="2" fill="#f2a91c" /><circle cx="78" cy="17" r="2.200" fill="#3fc565" />
    </svg>
  );
}

function Taskbar() {
  return (
    <footer className="flex h-[42px] shrink-0 border-t border-[#6a6a69] bg-[#3c3b3a] text-[#e8e8e8]">
      <div className="flex w-[50px] items-center justify-center">
        <svg width="18" height="18" viewBox="0 0 18 18" fill="#fff"><path d="M0 2.500 7.500 1.500V8.500H0zM8.500 1.300 18 0v8.500H8.500zM0 9.500h7.500v7L0 15.500zM8.500 9.500H18V18L8.500 16.700z" /></svg>
      </div>
      <div className="flex w-[358px] items-center border-l border-[#575756] bg-[#303030]">
        <Line size={18} className="ml-[11px] text-[#dcdcdc]"><circle cx="12" cy="7.500" r="6.300" /><path d="M7.500 12 1.500 18.500" /></Line>
        <span className="ml-[11.500px] whitespace-nowrap text-[15.200px] text-[#c2c2c2]">Aramak için buraya yazın</span>
        <Landscape />
      </div>
      <div className="ml-px flex">
        {APPS.map(([icon, bg = "", bar], i) => (
          <div key={i} className={`flex w-[51.700px] shrink-0 flex-col items-center ${bg}`}>
            <span className="flex flex-1 items-center justify-center">{icon}</span>
            <span className={`-mt-[3px] h-[3px] ${bar ? `${bar} bg-[#bd5a6b]` : ""}`} />
          </div>
        ))}
      </div>
      <div className="ml-auto flex items-center">
        <svg width="27" height="22" viewBox="0 0 27 22"><defs><linearGradient id="cl" x1="0" y1="0" x2="0" y2="1"><stop offset="0" stopColor="#d5e3fb" /><stop offset="1" stopColor="#83aef0" /></linearGradient></defs><path d="M6 21a5.500 5.500 0 0 1 0-11Q8 4.500 13.500 5t6.500 6q5.500 0 5.500 5t-5 5z" fill="url(#cl)" /><circle cx="22.500" cy="3.500" r="3.300" fill="#c42b1c" /></svg>
        <span className="ml-[8px] w-[87px] whitespace-pre text-[14.300px]">13°C  Bulutlu</span>
        <Line size={14} className="ml-[24px]" w={1.700}><path d="M1 15 10 5l9 10" /></Line>
        <svg width="13" height="16" viewBox="0 0 13 16" className="ml-[12px]" fill="none" stroke="#e0e0e0" strokeWidth="1.200"><path d="M1.500 4h7v7.500h-7zM8.500 7 12 5.500v5L8.500 9M2 2q3.500-2 8 0M2 13.500q3.500 2 8 0" /></svg>
        <svg width="18" height="12" viewBox="0 0 18 12" className="ml-[9px]"><path d="M4 12A4 4 0 0 1 4 4.500Q7-1 12 2.500q2 1.500 2 3 4 0 4 3.300T14.500 12z" fill="#f5f5f5" /><path d="M1 6Q2 4 5 3.500 8-1 12.500 2.500 14 4 14 5.500L6 9z" fill="#bdbdbd" /></svg>
        <svg width="17" height="10" viewBox="0 0 17 10" className="ml-[9px]"><rect x=".6" y=".6" width="14" height="8.800" fill="none" stroke="#eee" strokeWidth="1.100" /><rect x="2" y="2" width="5" height="6" fill="#fff" /><path d="M16 3v4" stroke="#eee" /></svg>
        <svg width="15" height="14" viewBox="0 0 15 14" className="ml-[10px]" fill="none" stroke="#b5b5b5" strokeWidth="1.100"><path d="M1 13Q1 2 13 1M4 13Q4 5 13 4M7 13q0-5 6-6M10 13q0-3 3-3.500" /><circle cx="12.500" cy="12.500" r="1" fill="#fff" /></svg>
        <svg width="18" height="15" viewBox="0 0 18 15" className="ml-[7px]" fill="none" stroke="#e3e3e3" strokeWidth="1.100"><path d="M1 5h3l3.500-3.500v12L4 10H1zM9.500 5q2 2.500 0 5M12 3q3.500 4.500 0 9M14.500 1q5 6.500 0 13" /></svg>
        <div className="-mt-[2px] ml-[9px] flex w-[60px] flex-col items-center text-[11.600px] leading-[19px]">
          <span>23:15</span><span>16.10.2022</span>
        </div>
        <svg width="27" height="30" viewBox="0 0 27 30" className="ml-[17px]"><path d="M1 3h17v13H7l-3 3v-3H1z" fill="#fff" /><path d="M4 6.500h11M4 9.500h11M4 12.500h6" stroke="#3c3b3a" /><circle cx="17.500" cy="19" r="8.500" fill="#3c3b3a" stroke="#9a9a9a" /><text x="17.500" y="23.300" fontSize="12" fontWeight="600" textAnchor="middle" fill="#fff" fontFamily="Noto Sans, sans-serif">3</text></svg>
        <span className="mr-[4px] ml-[12px] h-[42px] w-px bg-[#7b7b7b]" />
      </div>
    </footer>
  );
}

export default function App() {
  return (
    <div className="flex h-[900px] w-[1600px] flex-col overflow-hidden bg-white font-['Open_Sans','Noto_Sans',sans-serif]">
      <div className="flex h-[858px]">
        <nav className="flex w-[42px] shrink-0 flex-col bg-[#171b20] text-[#b9bec3]">
          {RAIL.map(([height, icon], i) => (
            <div key={i} className={`flex shrink-0 items-center justify-center pr-px ${height}`}>{icon}</div>
          ))}
        </nav>
        <div className="flex min-w-0 flex-1 flex-col">
          <TabBar />
          <div className="h-[72px] shrink-0 border-b border-[#1a2026] bg-[#3a4652]">
            <Toolbar />
            <Bookmarks />
          </div>
          <header className="flex h-[52px] shrink-0 items-center justify-end gap-[41px] bg-[#282c34] pt-px pr-[20px] font-['Liberation_Sans',Arial,sans-serif] text-[17px] text-white">
            <span>Harita</span>
            <span>İstatistikler</span>
          </header>
          <main className="flex h-[701px]">
            <PeopleList />
            <section className="relative min-w-0 flex-1">
              <TurkeyMap />
              <div className="absolute top-[319px] left-[510px] flex h-[33px] w-[125px] items-center justify-center rounded-[5px] bg-black pt-[2px] pl-px text-[15.600px] text-white">Ankara</div>
            </section>
          </main>
        </div>
      </div>
      <Taskbar />
    </div>
  );
}
